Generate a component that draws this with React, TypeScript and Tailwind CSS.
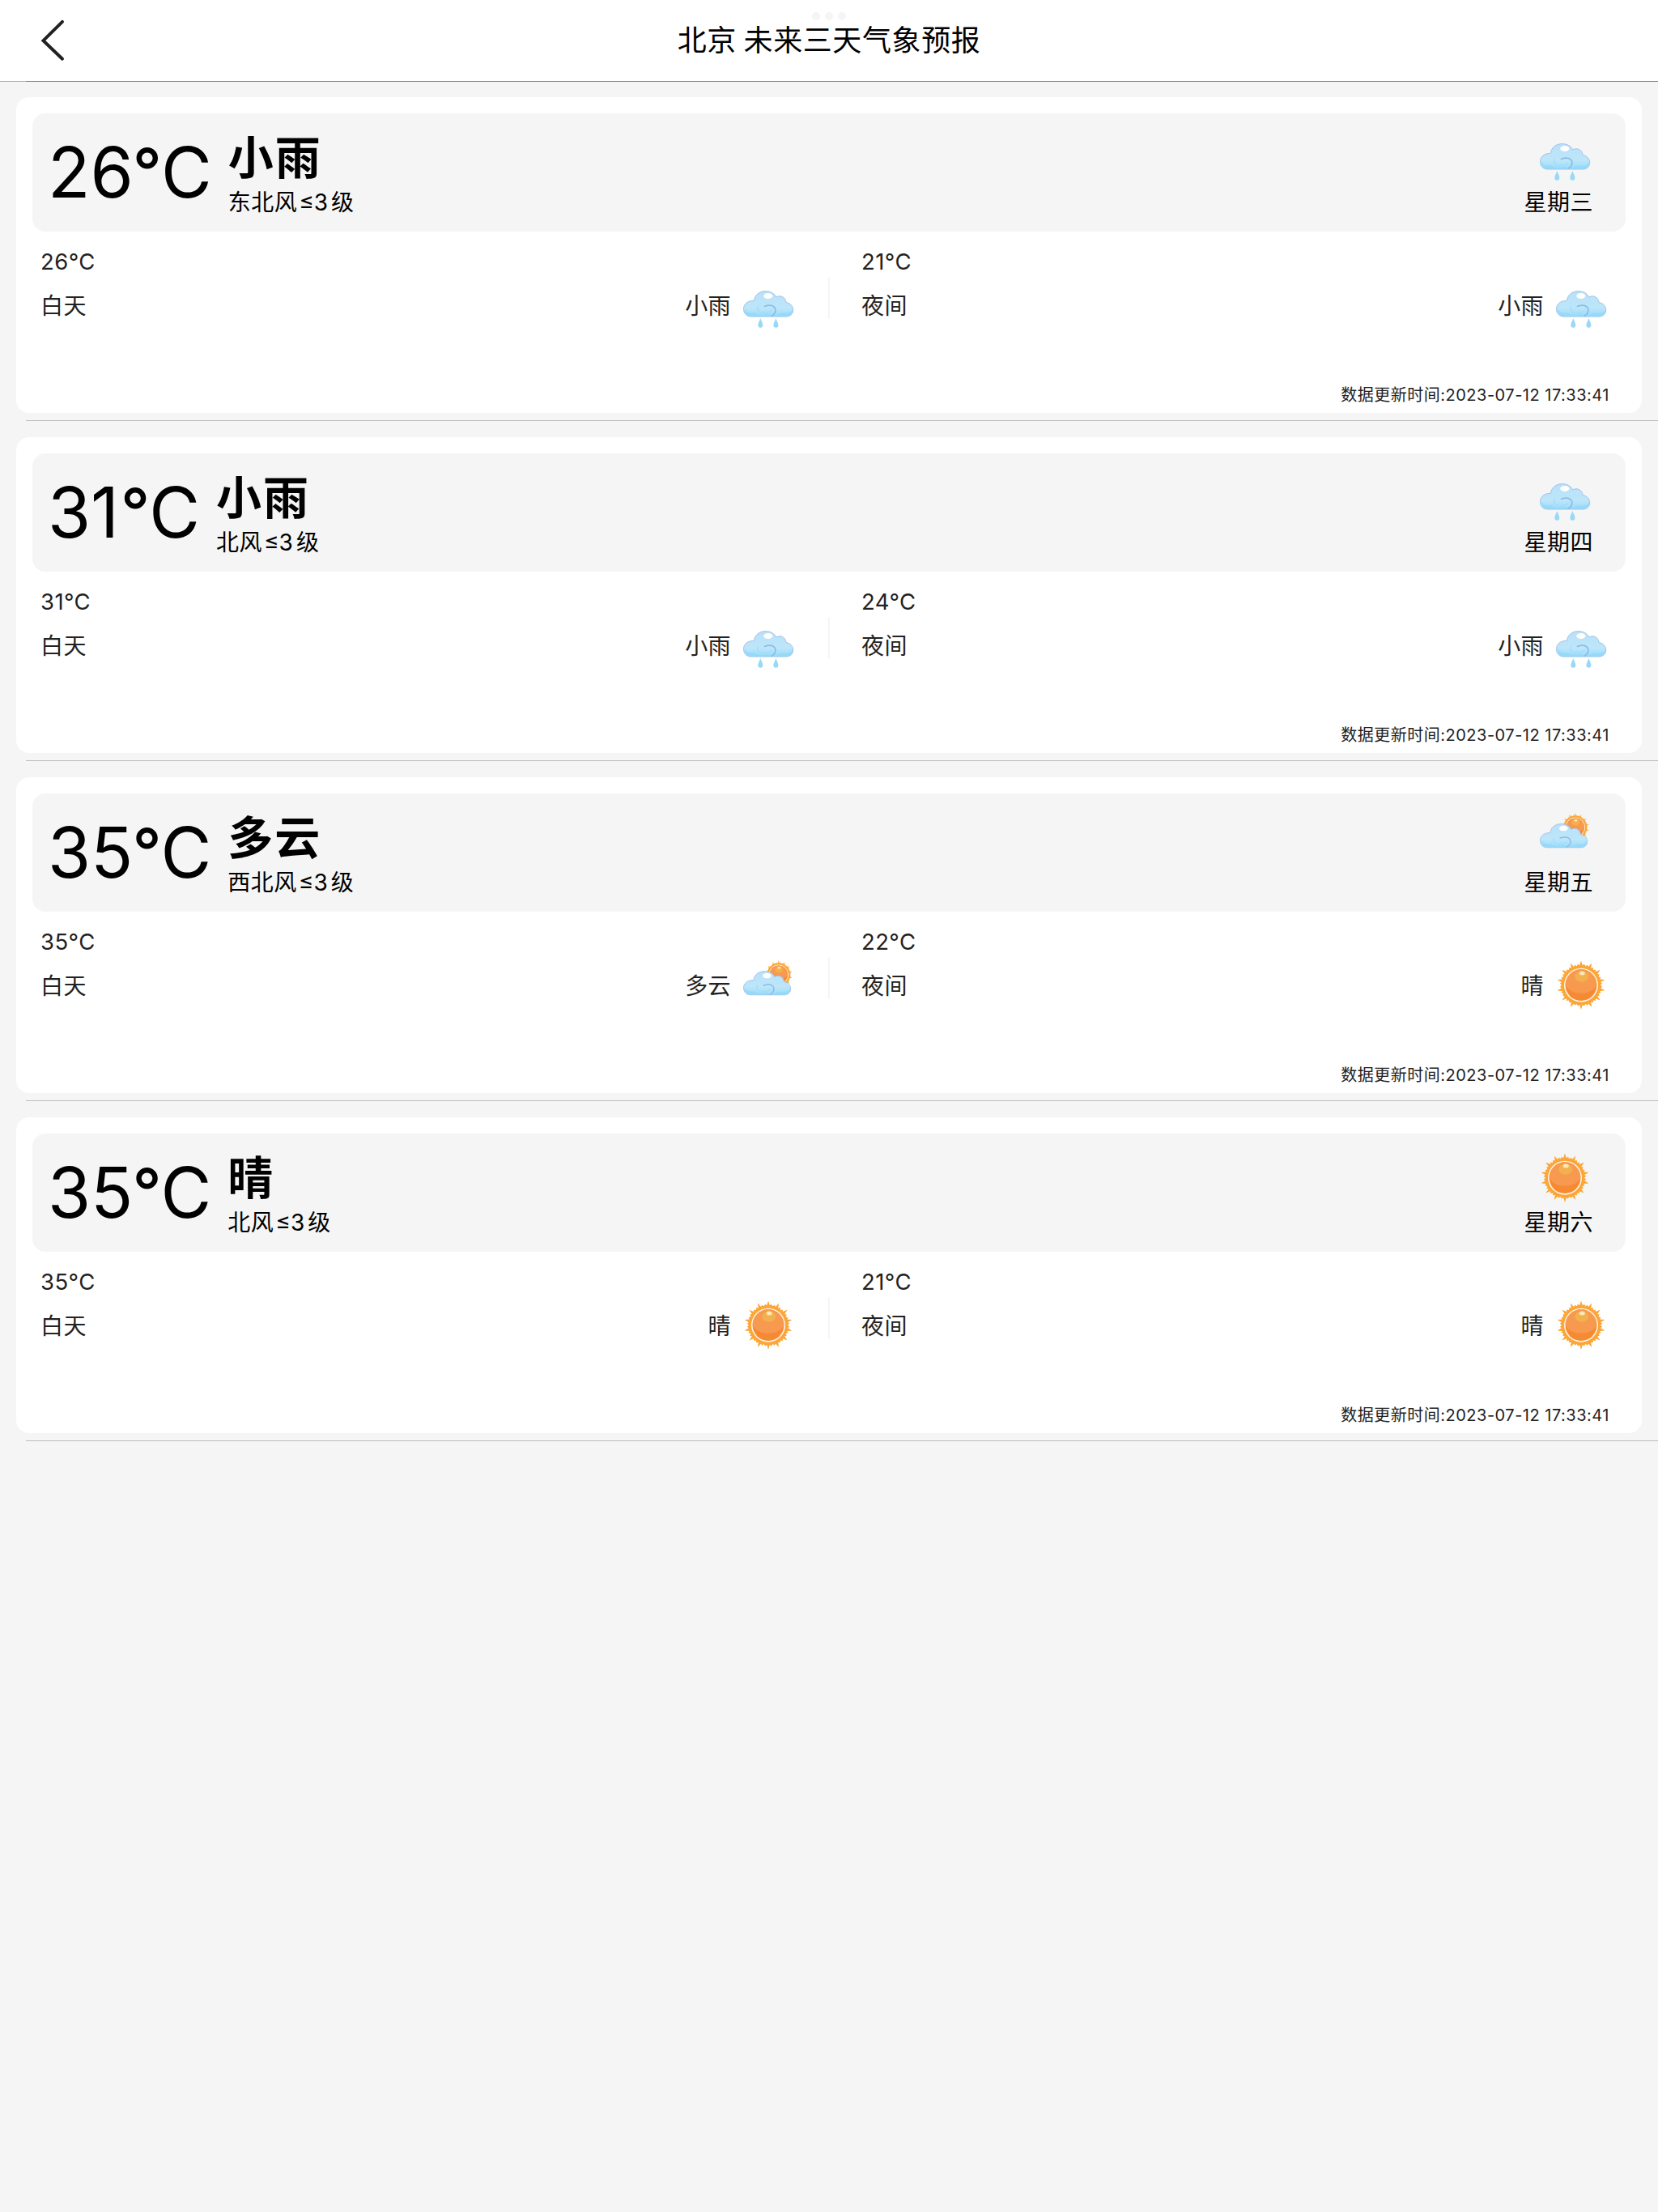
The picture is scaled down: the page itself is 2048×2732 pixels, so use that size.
type Kind = "rain" | "cloudy" | "sunny";

type Half = { temp: string; label: string; text: string; kind: Kind };

type Day = {
  temp: string;
  text: string;
  wind: string;
  kind: Kind;
  weekday: string;
  day: Half;
  night: Half;
};

const UPDATED = "数据更新时间:2023-07-12 17:33:41";

const DAYS: Day[] = [
  {
    temp: "26",
    text: "小雨",
    wind: "东北风",
    kind: "rain",
    weekday: "星期三",
    day: { temp: "26", label: "白天", text: "小雨", kind: "rain" },
    night: { temp: "21", label: "夜间", text: "小雨", kind: "rain" },
  },
  {
    temp: "31",
    text: "小雨",
    wind: "北风",
    kind: "rain",
    weekday: "星期四",
    day: { temp: "31", label: "白天", text: "小雨", kind: "rain" },
    night: { temp: "24", label: "夜间", text: "小雨", kind: "rain" },
  },
  {
    temp: "35",
    text: "多云",
    wind: "西北风",
    kind: "cloudy",
    weekday: "星期五",
    day: { temp: "35", label: "白天", text: "多云", kind: "cloudy" },
    night: { temp: "22", label: "夜间", text: "晴", kind: "sunny" },
  },
  {
    temp: "35",
    text: "晴",
    wind: "北风",
    kind: "sunny",
    weekday: "星期六",
    day: { temp: "35", label: "白天", text: "晴", kind: "sunny" },
    night: { temp: "21", label: "夜间", text: "晴", kind: "sunny" },
  },
];

/* 14 long rays with two short teeth between each pair, centred on the origin. */
const RAYS = (() => {
  const pts: string[] = [];
  const steps = 14 * 6;
  const radii = [30.2, 24.4, 26.2, 24, 26.2, 24.4];
  for (let i = 0; i < steps; i++) {
    const a = (i / steps) * Math.PI * 2;
    const r = radii[i % 6];
    pts.push(`${(Math.sin(a) * r).toFixed(2)},${(-Math.cos(a) * r).toFixed(2)}`);
  }
  return pts.join(" ");
})();

function Sun() {
  return (
    <g>
      <polygon points={RAYS} fill="#fba636" />
      <circle r="21" fill="#fff3e2" />
      <circle r="19.4" fill="#f68a34" />
      <path d="M-19.4 0A19.4 19.4 0 0 1 19.4 0C16 6.5 9 9.8 0 9.8S-16 6.5 -19.4 0Z" fill="#f79a50" />
      <ellipse cx="0.8" cy="-10.6" rx="8.4" ry="6.6" fill="#f3b04e" />
      <ellipse cx="1.3" cy="-14.6" rx="3.5" ry="2.5" fill="#fde6b4" />
    </g>
  );
}

const CLOUD =
  "M11 47C5 47 1.5 43 1.5 37.5C1.5 31.5 6.5 27.3 14.5 27.3C15 20.5 21 15.6 28.5 15.6C34.5 15.6 39.5 18.3 41.8 23C47 19.8 53.6 23 54 29.6C59.3 30.2 62.7 34.4 62.7 38.8C62.7 43.8 59 47 54 47Z";

function Cloud() {
  return (
    <g>
      <path d={CLOUD} fill="url(#cloud-fill)" stroke="#a3c3ea" strokeWidth="1" />
      <path d="M3 37C5 42 10 43 15 42C20 45.5 27 45.5 31 43.5L37 46.5H11C6 46.5 2.5 42.5 3 37Z" fill="#92d8f8" opacity="0.75" />
      <path d="M62 37.5C61 42 56 43 51 42.5C47 42.2 43.5 43.5 39.5 46.5H54C59 46.5 62.5 42.5 62 37.5Z" fill="#92d8f8" opacity="0.75" />
      <path d="M19.5 34C17 38.5 20.5 42.5 25.5 42.5C31 42.5 35 41.8 36 38.8" fill="none" stroke="#a5dcf8" strokeWidth="1.4" />
      <path d="M27.5 34.4C32 32.8 36 33 38 34.2C42.5 36.8 41.5 43.8 36 46" fill="none" stroke="#8dbde6" strokeWidth="1.7" strokeLinecap="round" />
      <ellipse cx="31.8" cy="21.5" rx="5.6" ry="3.5" fill="#ffffff" />
    </g>
  );
}

function WeatherIcon({ kind, className = "" }: { kind: Kind; className?: string }) {
  return (
    <svg viewBox="0 0 64 64" className={`size-16 shrink-0 ${className}`}>
      {kind === "rain" && (
        <>
          <Cloud />
          <path d="M22.3 49C23.5 52.5 25.3 55.5 25.3 57.6A3 3.2 0 0 1 19.3 57.6C19.3 55.5 21.1 52.5 22.3 49Z" fill="#97d9f7" />
          <path d="M41.4 49C42.6 52.5 44.4 55.5 44.4 57.6A3 3.2 0 0 1 38.4 57.6C38.4 55.5 40.2 52.5 41.4 49Z" fill="#97d9f7" />
        </>
      )}
      {kind === "cloudy" && (
        <>
          <g transform="translate(44.8 19.8) scale(0.58)">
            <Sun />
          </g>
          <g transform="translate(0.1 1.1) scale(0.95 0.93)">
            <Cloud />
          </g>
        </>
      )}
      {kind === "sunny" && (
        <g transform="translate(32 32.7)">
          <Sun />
        </g>
      )}
    </svg>
  );
}

function BigTemp({ value }: { value: string }) {
  return (
    <div className="mt-[30px] flex text-[86px] leading-[86px] whitespace-nowrap text-black">
      <span>{value}</span>
      <span className={`-mt-[2px] mr-[-1px] text-[79px] leading-[86px] font-medium ${value.endsWith("1") ? "ml-[2px]" : "ml-[-1px]"}`}>°</span>
      <span>C</span>
    </div>
  );
}

function HalfDay({ half, className }: { half: Half; className: string }) {
  return (
    <div className={`w-[1003px] shrink-0 text-[28px] text-[#222] ${className}`}>
      <div className="text-[27.5px] leading-[40px] tracking-[0.4px]">{half.temp}°C</div>
      <div className="mt-px flex h-16 items-center">
        <span className="pt-[4px] leading-[40px] tracking-[0.4px]">{half.label}</span>
        <span className="ml-auto pt-[4px] pr-[14px] leading-[40px] tracking-[0.4px]">{half.text}</span>
        <WeatherIcon kind={half.kind} />
      </div>
    </div>
  );
}

function DayCell({ item, first }: { item: Day; first: boolean }) {
  return (
    <section className={`flex flex-col px-5 pb-[9px] ${first ? "h-[418px] pt-[19px]" : "h-[419px] pt-5"}`}>
      <div className="flex flex-1 flex-col rounded-2xl bg-white pt-5">
        <div className="mx-5 flex h-[146px] items-start rounded-2xl bg-[#f5f5f5] pr-10 pl-[19px]">
          <BigTemp value={item.temp} />
          <div className="ml-[20px] flex flex-col gap-[9px] pt-[27px] text-black">
            <h2 className="text-[56px] leading-[56px] font-bold tracking-[2px]">{item.text}</h2>
            <p className="text-[28px] leading-[36px] tracking-[0.5px]">
              {item.wind}
              <span className="mr-[4px] ml-[2px] tracking-normal">≤3</span>级
            </p>
          </div>
          <div className="ml-auto flex flex-col items-end pt-[22px] text-black">
            <WeatherIcon kind={item.kind} className="mr-[3px]" />
            <p className="mt-[6px] text-[28px] leading-[36px] tracking-[0.5px]">{item.weekday}</p>
          </div>
        </div>
        <div className="mt-[17px] flex items-start">
          <HalfDay half={item.day} className="pr-[42px] pl-[30px]" />
          <div className="mt-[39px] h-[52px] w-[2px] shrink-0 bg-[#f5f5f5]" />
          <HalfDay half={item.night} className="pr-[43px] pl-[39px]" />
        </div>
        <p className="mt-auto pr-10 pb-3 text-right text-[20px] leading-[20px] tracking-[0.5px] text-[#222]">{UPDATED}</p>
      </div>
    </section>
  );
}

export default function App() {
  return (
    <main className="min-h-screen w-full bg-[#f5f5f5] font-['Inter','Noto_Sans_CJK_SC',sans-serif]">
      <svg className="absolute size-0" aria-hidden="true">
        <defs>
          <linearGradient id="cloud-fill" x1="0" y1="0" x2="0" y2="1">
            <stop offset="0" stopColor="#b9e0f8" />
            <stop offset="0.65" stopColor="#bde6fa" />
            <stop offset="1" stopColor="#9adcfa" />
          </linearGradient>
        </defs>
      </svg>
      <header className="relative flex h-[100px] items-center justify-center bg-white">
        <button className="absolute top-[22px] left-[46px]" aria-label="返回">
          <svg viewBox="0 0 40 56" className="h-14 w-10">
            <path d="M31 4.8L7.5 28.2L31 50.7" fill="none" stroke="#222" strokeWidth="4" strokeLinecap="round" />
          </svg>
        </button>
        <div className="absolute top-[15px] left-1/2 flex -translate-x-1/2 gap-[6px]">
          <i className="size-[10px] rounded-full bg-[#f5f5f5]" />
          <i className="size-[10px] rounded-full bg-[#f5f5f5]" />
          <i className="size-[10px] rounded-full bg-[#f5f5f5]" />
        </div>
        <h1 className="relative text-[36px] leading-[100px] tracking-[0.6px] text-black [word-spacing:-2px]">北京 未来三天气象预报</h1>
      </header>
      <div className="flex h-px bg-[#adadad] pl-8">
        <div className="flex-1 bg-[#838383]" />
      </div>
      {DAYS.map((d, i) => (
        <div key={d.weekday}>
          <DayCell item={d} first={i === 0} />
          <div className="ml-8 h-px bg-[#bdbdbd]" />
        </div>
      ))}
    </main>
  );
}
